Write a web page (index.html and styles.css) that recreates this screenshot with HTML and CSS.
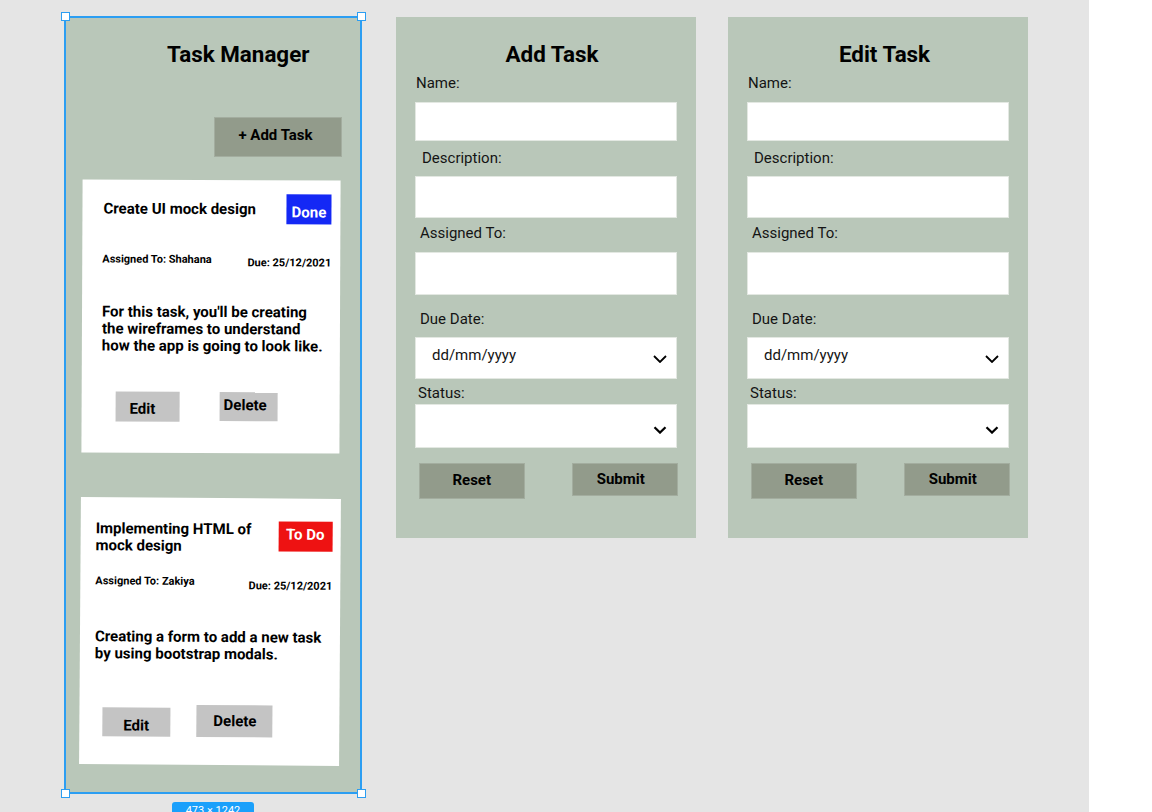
FILE: index.html
```html
<!DOCTYPE html>
<html lang="en">
<head>
<meta charset="utf-8">
<title>Task Manager wireframes</title>
<link rel="stylesheet" href="styles.css">
</head>
<body>
<div class="canvas">
  <section class="frame frame-list">
    <span class="handle h-tl"></span>
    <span class="handle h-tr"></span>
    <span class="handle h-bl"></span>
    <span class="handle h-br"></span>
    <h1 class="list-title">Task Manager</h1>
    <button class="add-btn">+ Add Task</button>

    <article class="card card-1">
      <div class="card-head">
        <h2 class="card-title">Create UI mock design</h2>
        <span class="badge badge-done">Done</span>
      </div>
      <div class="card-meta">
        <span class="meta-assigned">Assigned To: Shahana</span>
        <span class="meta-due">Due: 25/12/2021</span>
      </div>
      <p class="card-desc">For this task, you'll be creating the wireframes to understand how the app is going to look like.</p>
      <div class="card-actions">
        <button class="card-btn btn-edit">Edit</button>
        <button class="card-btn btn-delete">Delete</button>
      </div>
    </article>

    <article class="card card-2">
      <div class="card-head">
        <h2 class="card-title">Implementing HTML of mock design</h2>
        <span class="badge badge-todo">To Do</span>
      </div>
      <div class="card-meta">
        <span class="meta-assigned">Assigned To: Zakiya</span>
        <span class="meta-due">Due: 25/12/2021</span>
      </div>
      <p class="card-desc">Creating a form to add a new task by using bootstrap modals.</p>
      <div class="card-actions">
        <button class="card-btn btn-edit">Edit</button>
        <button class="card-btn btn-delete">Delete</button>
      </div>
    </article>

    <div class="size-label">473 × 1242</div>
  </section>

  <section class="frame form-frame form-add">
    <h1 class="form-title">Add Task</h1>
    <div class="label label-name">Name:</div>
    <div class="field field-name"></div>
    <div class="label label-desc">Description:</div>
    <div class="field field-desc"></div>
    <div class="label label-assigned">Assigned To:</div>
    <div class="field field-assigned"></div>
    <div class="label label-due">Due Date:</div>
    <div class="field field-date">
      <span class="date-text">dd/mm/yyyy</span>
      <svg class="chev chev-date" width="14" height="8" viewBox="0 0 14 8"><polyline points="1,1 7,7 13,1" fill="none" stroke="#000" stroke-width="1.8"/></svg>
    </div>
    <div class="label label-status">Status:</div>
    <div class="field field-status">
      <svg class="chev chev-status" width="14" height="8" viewBox="0 0 14 8"><polyline points="1.5,1.2 7,6.6 12.5,1.2" fill="none" stroke="#000" stroke-width="2.2"/></svg>
    </div>
    <div class="form-actions">
      <button class="form-btn btn-reset">Reset</button>
      <button class="form-btn btn-submit">Submit</button>
    </div>
  </section>

  <section class="frame form-frame form-edit">
    <h1 class="form-title">Edit Task</h1>
    <div class="label label-name">Name:</div>
    <div class="field field-name"></div>
    <div class="label label-desc">Description:</div>
    <div class="field field-desc"></div>
    <div class="label label-assigned">Assigned To:</div>
    <div class="field field-assigned"></div>
    <div class="label label-due">Due Date:</div>
    <div class="field field-date">
      <span class="date-text">dd/mm/yyyy</span>
      <svg class="chev chev-date" width="14" height="8" viewBox="0 0 14 8"><polyline points="1,1 7,7 13,1" fill="none" stroke="#000" stroke-width="1.8"/></svg>
    </div>
    <div class="label label-status">Status:</div>
    <div class="field field-status">
      <svg class="chev chev-status" width="14" height="8" viewBox="0 0 14 8"><polyline points="1.5,1.2 7,6.6 12.5,1.2" fill="none" stroke="#000" stroke-width="2.2"/></svg>
    </div>
    <div class="form-actions">
      <button class="form-btn btn-reset">Reset</button>
      <button class="form-btn btn-submit">Submit</button>
    </div>
  </section>
</div>
</body>
</html>
```

FILE: styles.css
```css
* { box-sizing: border-box; }

html, body {
  margin: 0;
  height: 812px;
  overflow: hidden;
  background: #ffffff;
  font-family: Roboto, "Liberation Sans", sans-serif;
  color: #000;
}

h1, h2, p { margin: 0; }

button {
  font-family: inherit;
  border: 0;
  margin: 0;
  color: #000;
  cursor: pointer;
  display: flex;
  align-items: flex-start;
}

.canvas {
  width: 1089px;
  height: 812px;
  background: #e5e5e5;
  display: flex;
  align-items: flex-start;
  padding: 17px 0 0 65px;
}

.frame {
  background: #b9c7b9;
  display: flex;
  flex-direction: column;
  flex-shrink: 0;
}

/* ---------- list frame ---------- */
.frame-list {
  position: relative;
  width: 296px;
  height: 776px;
  outline: 2px solid #2c9ef2;
  outline-offset: -1px;
}

.handle {
  position: absolute;
  width: 9px;
  height: 9px;
  background: #fff;
  border: 1px solid #2c9ef2;
  z-index: 3;
}
.h-tl { left: -4px; top: -5px; }
.h-tr { right: -5px; top: -5px; }
.h-bl { left: -4px; bottom: -5px; }
.h-br { right: -5px; bottom: -5px; }

.size-label {
  position: absolute;
  top: 785px;
  left: 107px;
  width: 82px;
  height: 18px;
  border-radius: 3px;
  background: #1aa0fb;
  color: #fff;
  font-size: 11px;
  line-height: 14px;
  padding-top: 2px;
  text-align: center;
}

.list-title {
  font-size: 22.4px;
  line-height: 26px;
  font-weight: 700;
  margin-top: 24px;
  padding-left: 102px;
}

.add-btn {
  align-self: flex-end;
  align-items: center;
  justify-content: center;
  margin: 50px 19px 0 0;
  width: 128px;
  height: 40px;
  background: #929b8b;
  border: 1px solid #a3ad9f;
  font-size: 15px;
  line-height: 18px;
  font-weight: 700;
  padding: 0 5px 4px 0;
}

.card {
  background: #fff;
  display: flex;
  flex-direction: column;
}

.card-head {
  display: flex;
  align-items: flex-start;
}

.card-title {
  font-size: 15px;
  font-weight: 700;
  line-height: 18px;
}

.badge {
  margin-left: auto;
  height: 30px;
  color: #fff;
  font-size: 15px;
  line-height: 18px;
  font-weight: 700;
  text-align: center;
}
.badge-done { width: 45px; background: #1428f5; padding-top: 8.5px; }
.badge-todo { width: 54px; background: #ee1212; padding-top: 4px; padding-right: 1px; }

.card-meta {
  display: flex;
  align-items: flex-start;
  justify-content: space-between;
  font-size: 11px;
  line-height: 13px;
  font-weight: 700;
}

.card-desc {
  font-size: 15px;
  font-weight: 700;
  line-height: 17.3px;
}

.card-actions {
  display: flex;
  align-items: flex-start;
}

.card-btn {
  background: #c4c4c4;
  font-size: 15px;
  line-height: 18px;
  font-weight: 700;
  justify-content: flex-start;
}

/* card 1 */
.card-1 {
  margin: 23px 0 0 17px;
  width: 258px;
  height: 273px;
  transform: rotate(0.25deg);
}
.card-1 .card-head { padding: 14px 9px 0 21px; }
.card-1 .card-title { margin-top: 6px; }
.card-1 .card-meta { margin-top: 28.5px; padding: 0 9px 0 20px; }
.card-1 .meta-due { margin-top: 3px; }
.card-1 .card-desc { margin-top: 35px; padding-left: 20px; max-width: 248px; }
.card-1 .card-actions { margin-top: 37px; padding-left: 34px; gap: 40px; }
.card-1 .btn-edit { width: 64px; height: 30px; padding: 8px 0 0 14px; }
.card-1 .btn-delete { width: 58px; height: 29px; padding: 4px 0 0 4px; }

/* card 2 */
.card-2 {
  margin: 45px 0 0 15px;
  width: 260px;
  height: 267px;
  transform: rotate(0.4deg);
}
.card-2 .card-head { padding: 22.5px 8px 0 15px; }
.card-2 .card-title { line-height: 17.5px; max-width: 175px; }
.card-2 .card-meta { margin-top: 19.5px; padding: 0 8px 0 15px; }
.card-2 .meta-due { margin-top: 4px; }
.card-2 .card-desc { margin-top: 37px; padding-left: 15px; max-width: 252px; }
.card-2 .card-actions { margin-top: 41px; padding-left: 23px; gap: 26px; }
.card-2 .btn-edit { width: 68px; height: 29px; margin-top: 3px; padding: 9px 0 0 21px; }
.card-2 .btn-delete { width: 76px; height: 32px; padding: 7.5px 0 0 17px; }

/* ---------- form frames ---------- */
.form-frame {
  width: 300px;
  height: 521px;
}
.form-add { margin-left: 35px; }
.form-edit { margin-left: 32px; }

.form-title {
  font-size: 22.4px;
  line-height: 26px;
  font-weight: 700;
  margin-top: 24px;
  text-align: center;
  padding-left: 12px;
}
.form-edit .form-title { padding-left: 13px; }

.label {
  font-size: 15px;
  line-height: 18px;
  color: #141414;
}

.field {
  margin-left: 19px;
  width: 262px;
  background: #fff;
  border: 1px solid #e3e8e2;
}

.label-name { margin: 7px 0 0 20px; }
.field-name { margin-top: 9.5px; height: 39.5px; }
.label-desc { margin: 7.5px 0 0 26px; }
.field-desc { margin-top: 9.5px; height: 41.5px; }
.label-assigned { margin: 6.5px 0 0 24px; }
.field-assigned { margin-top: 9.5px; height: 43.5px; }
.label-due { margin: 15px 0 0 24px; }
.field-date {
  margin-top: 8.5px;
  height: 42.5px;
  display: flex;
  align-items: flex-start;
  padding: 8px 9px 0 16px;
}
.label-status { margin: 5px 0 0 22px; }
.field-status {
  margin-top: 2px;
  height: 43.5px;
  display: flex;
  align-items: flex-start;
  justify-content: flex-end;
  padding: 20.5px 9px 0 0;
}

.date-text {
  font-size: 15px;
  line-height: 18px;
  color: #141414;
}

.chev { display: block; }
.chev-date { margin: 9.5px 0 0 auto; }

.form-actions {
  display: flex;
  align-items: flex-start;
  margin-top: 15.5px;
  padding-left: 23px;
  gap: 47.5px;
}

.form-btn {
  width: 105.5px;
  background: #929b8b;
  border: 1px solid #a3ad9f;
  font-size: 15px;
  line-height: 18px;
  font-weight: 700;
  justify-content: center;
}
.btn-reset { height: 36px; padding: 7px 0 0 0; }
.btn-submit { height: 33px; padding: 5.5px 8px 0 0; }
```
